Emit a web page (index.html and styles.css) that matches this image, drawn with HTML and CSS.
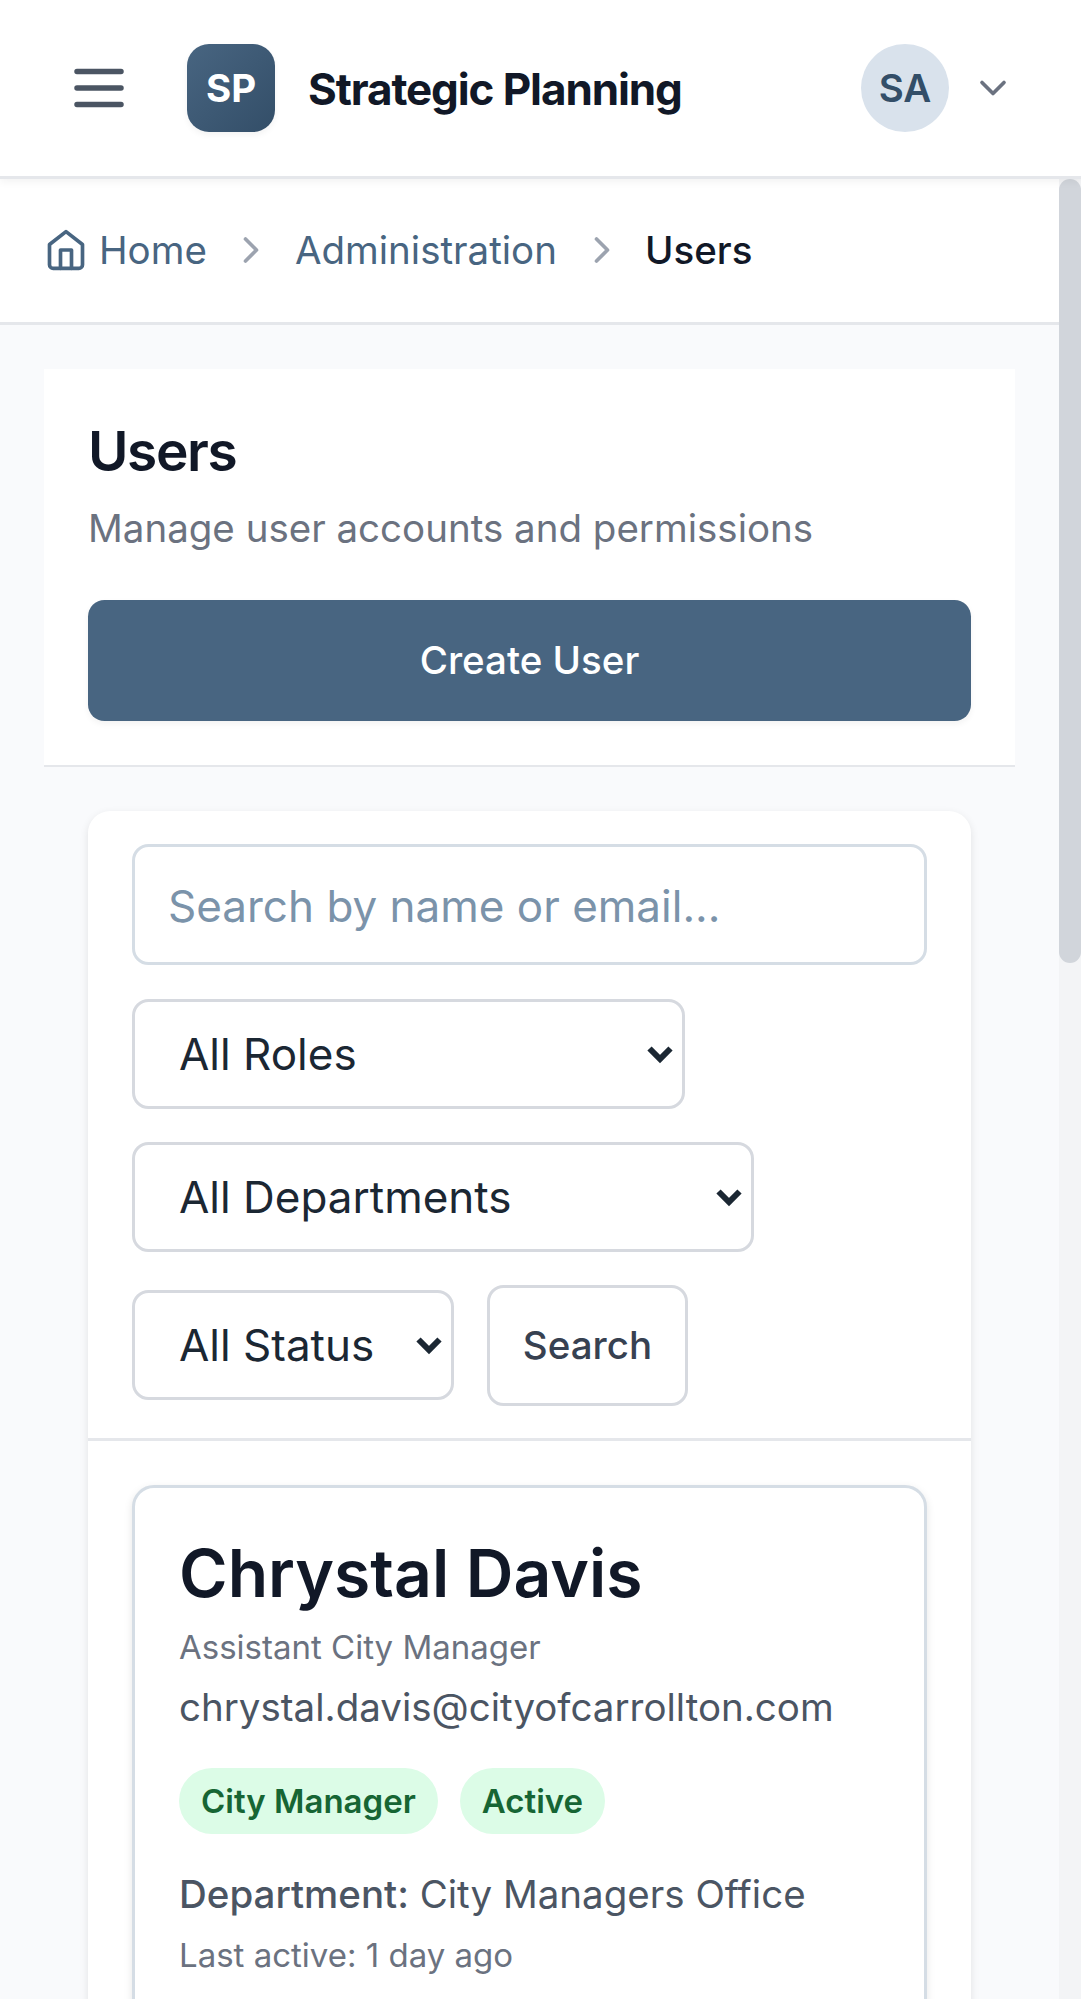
FILE: index.html
```html
<!DOCTYPE html>
<html lang="en">
<head>
<meta charset="utf-8">
<title>Users - Strategic Planning</title>
<link rel="stylesheet" href="styles.css">
</head>
<body>
<header class="topbar">
  <button class="menu-button" aria-label="Open menu">
    <svg class="icon-lg" viewBox="0 0 24 24"><path d="M4 6h16M4 12h16M4 18h16"/></svg>
  </button>
  <div class="logo">SP</div>
  <div class="brand">Strategic Planning</div>
  <div class="account">
    <div class="avatar">SA</div>
    <svg class="icon" viewBox="0 0 24 24"><path d="m6 9 6 6 6-6"/></svg>
  </div>
</header>
<div class="viewport">
  <main class="content">
    <nav class="breadcrumb">
      <a class="crumb" href="#"><svg class="icon" viewBox="0 0 24 24"><path d="m3 9 9-7 9 7v11a2 2 0 0 1-2 2H5a2 2 0 0 1-2-2z"/><path d="M9 22V12h6v10"/></svg><span>Home</span></a>
      <svg class="icon separator" viewBox="0 0 24 24"><path d="m9 18 6-6-6-6"/></svg>
      <a class="crumb" href="#">Administration</a>
      <svg class="icon separator" viewBox="0 0 24 24"><path d="m9 18 6-6-6-6"/></svg>
      <span class="crumb-current">Users</span>
    </nav>
    <section class="page-header">
      <h1 class="page-title">Users</h1>
      <p class="page-subtitle">Manage user accounts and permissions</p>
      <button class="button-primary">Create User</button>
    </section>
    <section class="panel">
      <form class="filters">
        <input class="search-input" type="text" placeholder="Search by name or email...">
        <div class="select select-roles">
          <select><option>All Roles</option></select>
          <svg class="select-arrow" viewBox="0 0 26 18"><path d="M2.500 2.500 13 13 23.500 2.500"/></svg>
        </div>
        <div class="select select-departments">
          <select><option>All Departments</option></select>
          <svg class="select-arrow" viewBox="0 0 26 18"><path d="M2.500 2.500 13 13 23.500 2.500"/></svg>
        </div>
        <div class="filter-row">
          <div class="select select-status">
            <select><option>All Status</option></select>
            <svg class="select-arrow" viewBox="0 0 26 18"><path d="M2.500 2.500 13 13 23.500 2.500"/></svg>
          </div>
          <button class="button-secondary" type="button">Search</button>
        </div>
      </form>
      <div class="user-list">
        <article class="user-card">
          <h2 class="user-name">Chrystal Davis</h2>
          <p class="user-title">Assistant City Manager</p>
          <p class="user-email">chrystal.davis@cityofcarrollton.com</p>
          <div class="badges"><span class="badge">City Manager</span><span class="badge">Active</span></div>
          <p class="user-department"><strong>Department:</strong> City Managers Office</p>
          <p class="user-activity">Last active: 1 day ago</p>
        </article>
      </div>
    </section>
  </main>
  <div class="scrollbar"><div class="scrollbar-thumb"></div></div>
</div>
</body>
</html>
```
FILE: styles.css
```css
*, *::before, *::after { box-sizing: border-box; }

html { font-size: 44px; }

body {
  margin: 0;
  height: 1999px;
  overflow: hidden;
  display: flex;
  flex-direction: column;
  background: #f9fafc;
  color: #111827;
  font-family: Inter, "Liberation Sans", sans-serif;
  font-size: 0.875rem;
  line-height: 1.25rem;
}

h1, h2, p { margin: 0; }

button, input, select { font: inherit; letter-spacing: inherit; }

svg {
  display: block;
  fill: none;
  stroke: currentColor;
  stroke-width: 2;
  stroke-linecap: round;
  stroke-linejoin: round;
}

.icon { width: 1rem; height: 1rem; flex: none; }
.icon-lg { width: 1.5rem; height: 1.5rem; }

.topbar {
  position: relative;
  z-index: 1;
  flex: none;
  height: 179px;
  padding: 0 1.5rem;
  display: flex;
  align-items: center;
  background: #fff;
  border-bottom: 3px solid #e5e7eb;
  box-shadow: 0 3px 8px rgba(0, 0, 0, 0.05);
}

.menu-button {
  padding: 0;
  border: 0;
  background: none;
  color: #4b5563;
}

.logo {
  width: 2rem;
  height: 2rem;
  margin: 0 0.75rem 0 55px;
  display: grid;
  place-items: center;
  border-radius: 0.5rem;
  background: linear-gradient(135deg, #486581, #334e68);
  box-shadow: 0 3px 6px rgba(0, 0, 0, 0.05);
  color: #fff;
  font-weight: 700;
}

.brand {
  padding-top: 2px;
  font-size: 1rem;
  font-weight: 700;
  letter-spacing: -0.025em;
}

.account {
  margin-left: auto;
  display: flex;
  align-items: center;
  gap: 0.5rem;
  color: #6b7280;
}

.avatar {
  width: 2rem;
  height: 2rem;
  display: grid;
  place-items: center;
  border-radius: 50%;
  background: #d9e2ec;
  color: #334e68;
  font-weight: 600;
}

.viewport {
  flex: 1;
  min-height: 0;
  display: flex;
}

.content {
  flex: 1;
  min-width: 0;
  overflow: hidden;
}

.breadcrumb {
  height: 146px;
  padding: 0 1rem 1px;
  display: flex;
  align-items: center;
  gap: 0.5rem;
  background: #fff;
  border-bottom: 3px solid #e5e7eb;
}

.crumb {
  display: flex;
  align-items: center;
  gap: 0.25rem;
  color: #486581;
  text-decoration: none;
}

.crumb-current { font-weight: 500; }
.separator { color: #9ca3af; }
.separator:last-of-type { margin: 0 -1px 0 1px; }

.page-header {
  height: 398px;
  margin: 1rem 1rem 0;
  padding: 1rem;
  background: #fff;
  border-bottom: 2px solid #e5e7eb;
}

.page-title {
  font-size: 1.25rem;
  line-height: 1.75rem;
  font-weight: 600;
  letter-spacing: -0.025em;
}

.page-subtitle {
  margin: 0.25rem 0 1rem;
  color: #6b7280;
}

.button-primary {
  width: 100%;
  height: 2.75rem;
  border: 0;
  border-radius: 0.375rem;
  background: #486581;
  box-shadow: 0 3px 6px rgba(0, 0, 0, 0.05);
  color: #fff;
  font-weight: 500;
}

.panel {
  margin: 44.4px 2rem 0;
  border-radius: 0.5rem;
  background: #fff;
  box-shadow: 0 3px 8px rgba(0, 0, 0, 0.1);
}

.filters {
  height: 629.6px;
  padding: 0.75rem 1rem 0;
  display: flex;
  flex-direction: column;
  gap: 33.2px;
  border-bottom: 3px solid #e5e7eb;
}

.search-input {
  flex: none;
  width: 100%;
  height: 2.75rem;
  padding: 2px 0.75rem 0;
  border: 3px solid #d5dde5;
  border-radius: 0.375rem;
  background: #fff;
  font-size: 1rem;
}

.search-input::placeholder { color: #7b93aa; opacity: 1; }

.select {
  position: relative;
  flex: none;
  height: 2.5rem;
}

.select select {
  appearance: none;
  display: block;
  width: 100%;
  height: 100%;
  padding: 1px 1rem 0;
  border: 3px solid #d6d9df;
  border-radius: 0.375rem;
  background: #fff;
  color: #1b2733;
  font-size: 1rem;
}

.select-arrow {
  position: absolute;
  right: 12px;
  top: 47px;
  width: 26px;
  height: 18px;
  stroke: #1b2733;
  stroke-width: 6;
  stroke-linecap: butt;
  stroke-linejoin: miter;
}

.select-roles { width: 553px; }
.select-departments { width: 622px; }
.select-status { width: 322px; }

.filter-row {
  display: flex;
  align-items: center;
  gap: 0.75rem;
}

.button-secondary {
  width: 201px;
  height: 2.75rem;
  padding: 0;
  border: 3px solid #d6d9df;
  border-radius: 0.375rem;
  background: #fff;
  color: #374151;
  font-weight: 500;
}

.user-list { padding: 1rem; }

.user-card {
  height: 700px;
  padding: 1rem;
  border: 3px solid #d5dde5;
  border-radius: 0.5rem;
  background: #fff;
  box-shadow: 0 3px 8px rgba(0, 0, 0, 0.1);
}

.user-name {
  font-size: 1.5rem;
  line-height: 1.875rem;
  font-weight: 600;
}

.user-title {
  margin: 10.5px 0 11.5px;
  color: #6b7280;
  font-size: 0.75rem;
  line-height: 1rem;
}

.user-email { color: #4b5563; }

.badges {
  margin: 0.75rem 0;
  display: flex;
  gap: 0.5rem;
}

.badge {
  padding: 0 0.5rem;
  border-radius: 0.75rem;
  background: #dcfce7;
  color: #166534;
  font-size: 0.75rem;
  line-height: 1.5rem;
  font-weight: 600;
}

.user-department { color: #4b5563; }
.user-department strong { font-weight: 500; }

.user-activity {
  margin-top: 10.5px;
  color: #6b7280;
  font-size: 0.75rem;
  line-height: 1rem;
}

.scrollbar {
  width: 22px;
  background: #f3f4f6;
}

.scrollbar-thumb {
  height: 784px;
  border-radius: 11px;
  background: #d1d5db;
}
```
